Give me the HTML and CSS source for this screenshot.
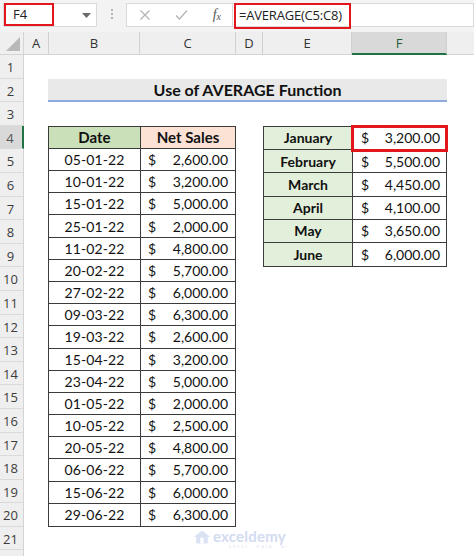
FILE: index.html
```html
<!DOCTYPE html>
<html>
<head>
<meta charset="utf-8">
<link rel="stylesheet" href="styles.css">
</head>
<body>
<div class="app">
  <div class="fbar">
    <div class="namebox">
      <span class="name-ref">F4</span>
      <svg class="dd" width="9" height="5" viewBox="0 0 9 5"><path d="M0 0H9L4.5 5Z" fill="#6b6b6b"/></svg>
    </div>
    <div class="grip"><i></i><i></i><i></i></div>
    <div class="fbtns">
      <svg width="12" height="12" viewBox="0 0 12 12"><path d="M1.5 1.5L10.5 10.5M10.5 1.5L1.5 10.5" stroke="#b4b4b4" stroke-width="1.3" fill="none"/></svg>
      <svg width="13" height="12" viewBox="0 0 13 12"><path d="M1 6.5L4.5 10L12 1.5" stroke="#b4b4b4" stroke-width="1.3" fill="none"/></svg>
      <span class="fx">f<sub>x</sub></span>
    </div>
    <div class="finput"><span class="formula">=AVERAGE(C5:C8)</span></div>
  </div>

  <div class="sheet">
    <div class="corner"><svg width="14" height="14" viewBox="0 0 14 14"><path d="M14 0V14H0Z" fill="#b9b9b9"/></svg></div>
    <div class="ch">A</div>
    <div class="ch">B</div>
    <div class="ch">C</div>
    <div class="ch">D</div>
    <div class="ch">E</div>
    <div class="ch sel">F</div>
    <div class="ch last"></div>

    <div class="rh r1">1</div>
    <div class="rh r2">2</div>
    <div class="rh r3">3</div>
    <div class="rh r4 sel">4</div>
    <div class="rh r5">5</div>
    <div class="rh r6">6</div>
    <div class="rh r7">7</div>
    <div class="rh r8">8</div>
    <div class="rh r9">9</div>
    <div class="rh r10">10</div>
    <div class="rh r11">11</div>
    <div class="rh r12">12</div>
    <div class="rh r13">13</div>
    <div class="rh r14">14</div>
    <div class="rh r15">15</div>
    <div class="rh r16">16</div>
    <div class="rh r17">17</div>
    <div class="rh r18">18</div>
    <div class="rh r19">19</div>
    <div class="rh r20">20</div>
    <div class="rh r21">21</div>
    <div class="rh r22"></div>

    <div class="title">Use of AVERAGE Function</div>

    <div class="t1">
      <div class="hd date">Date</div><div class="hd sales">Net Sales</div>
      <div class="d">05-01-22</div><div class="m"><span>$</span><span>2,600.00</span></div>
      <div class="d">10-01-22</div><div class="m"><span>$</span><span>3,200.00</span></div>
      <div class="d">15-01-22</div><div class="m"><span>$</span><span>5,000.00</span></div>
      <div class="d">25-01-22</div><div class="m"><span>$</span><span>2,000.00</span></div>
      <div class="d">11-02-22</div><div class="m"><span>$</span><span>4,800.00</span></div>
      <div class="d">20-02-22</div><div class="m"><span>$</span><span>5,700.00</span></div>
      <div class="d">27-02-22</div><div class="m"><span>$</span><span>6,000.00</span></div>
      <div class="d">09-03-22</div><div class="m"><span>$</span><span>6,300.00</span></div>
      <div class="d">19-03-22</div><div class="m"><span>$</span><span>2,600.00</span></div>
      <div class="d">15-04-22</div><div class="m"><span>$</span><span>3,200.00</span></div>
      <div class="d">23-04-22</div><div class="m"><span>$</span><span>5,000.00</span></div>
      <div class="d">01-05-22</div><div class="m"><span>$</span><span>2,000.00</span></div>
      <div class="d">10-05-22</div><div class="m"><span>$</span><span>2,500.00</span></div>
      <div class="d">20-05-22</div><div class="m"><span>$</span><span>4,800.00</span></div>
      <div class="d">06-06-22</div><div class="m"><span>$</span><span>5,700.00</span></div>
      <div class="d">15-06-22</div><div class="m"><span>$</span><span>6,000.00</span></div>
      <div class="d">29-06-22</div><div class="m"><span>$</span><span>6,300.00</span></div>
    </div>

    <div class="t2">
      <div class="mo">January</div><div class="m active"><span>$</span><span>3,200.00</span></div>
      <div class="mo">February</div><div class="m"><span>$</span><span>5,500.00</span></div>
      <div class="mo">March</div><div class="m"><span>$</span><span>4,450.00</span></div>
      <div class="mo">April</div><div class="m"><span>$</span><span>4,100.00</span></div>
      <div class="mo">May</div><div class="m"><span>$</span><span>3,650.00</span></div>
      <div class="mo">June</div><div class="m"><span>$</span><span>6,000.00</span></div>
    </div>

    <div class="wm">
      <svg width="18" height="16" viewBox="0 0 22 18"><path d="M11 1L1 9H4V17H18V9H21Z" fill="#dbe2f4"/><rect x="9" y="10" width="4" height="7" fill="#fff"/></svg>
      <div class="wm-txt"><span class="wm-name">exceldemy</span><span class="wm-sub">EXCEL · DATA · BI</span></div>
    </div>
  </div>
</div>
</body>
</html>
```

FILE: styles.css
```css
* { box-sizing: border-box; }
html, body { margin: 0; padding: 0; background: #fff; }
body { font-family: Lato, "Open Sans", sans-serif; color: #111; width: 474px; height: 556px; overflow: hidden; }

.fbar {
  height: 32px;
  background: #f3f3f3;
  display: flex;
  align-items: flex-start;
  padding-top: 3px;
  padding-left: 3px;
}
.namebox {
  width: 94px;
  height: 24px;
  background: #fff;
  border: 1px solid #dadada;
  display: flex;
  align-items: center;
  justify-content: space-between;
  padding-right: 5px;
}
.name-ref {
  width: 50px;
  height: 23px;
  margin-top: -1px;
  border: 2.5px solid #e3161e;
  font-size: 13px;
  line-height: 18px;
  padding-left: 7px;
  color: #222;
  font-family: "Open Sans", sans-serif;
}
.grip {
  width: 29px;
  display: flex;
  flex-direction: column;
  align-items: center;
  gap: 2px;
  padding-top: 6px;
}
.grip i { display: block; width: 2px; height: 2px; background: #b5b5b5; }
.fbtns {
  width: 106px;
  height: 24px;
  background: #fff;
  border: 1px solid #dadada;
  border-right: none;
  display: flex;
  align-items: center;
  justify-content: space-between;
  padding: 0 11px 0 12px;
}
.fx { font-family: "Liberation Serif", serif; font-style: italic; font-size: 14px; color: #555; }
.fx sub { font-size: 10px; vertical-align: -1px; }
.finput {
  flex: 1;
  height: 24px;
  background: #fff;
  border: 1px solid #dadada;
}
.formula {
  display: inline-block;
  height: 26px;
  width: 117px;
  margin-left: 1px;
  margin-top: -1px;
  border: 2.5px solid #e3161e;
  font-family: "Open Sans", sans-serif;
  font-size: 13px;
  line-height: 20px;
  padding-left: 3px;
  color: #222;
  white-space: nowrap;
  letter-spacing: -0.2px;
}

.sheet {
  position: relative;
  display: grid;
  grid-template-columns: 24px 25px 91px 96px 27px 89px 95px 27px;
  grid-template-rows: 23px repeat(22, 23.6px);
}
.corner {
  grid-row: 1; grid-column: 1;
  background: #efefef;
  border-right: 1px solid #d4d4d4;
  border-bottom: 1px solid #d4d4d4;
  display: flex; align-items: flex-end; justify-content: flex-end;
  padding: 0 3px 3px 0;
}
.ch {
  grid-row: 1;
  background: #efefef;
  border-right: 1px solid #d0d0d0;
  border-bottom: 1px solid #d4d4d4;
  text-align: center;
  font-size: 13px;
  line-height: 22px;
  color: #333;
  font-family: "Open Sans", sans-serif;
}
.ch.sel { background: #d9d9d9; border-bottom: 2px solid #217346; color: #1e5c38; }
.ch.last { border-right: none; }

.rh {
  grid-column: 1;
  background: #efefef;
  border-right: 1px solid #d4d4d4;
  border-bottom: 1px solid #dadada;
  text-align: center;
  font-size: 13px;
  line-height: 24px;
  color: #3c3c3c;
  font-family: "Open Sans", sans-serif;
  padding-right: 2px;
}
.rh.sel { background: #d9d9d9; border-right: 2px solid #217346; color: #555; }
.r1 { grid-row: 2; } .r2 { grid-row: 3; } .r3 { grid-row: 4; } .r4 { grid-row: 5; }
.r5 { grid-row: 6; } .r6 { grid-row: 7; } .r7 { grid-row: 8; } .r8 { grid-row: 9; }
.r9 { grid-row: 10; } .r10 { grid-row: 11; } .r11 { grid-row: 12; } .r12 { grid-row: 13; }
.r13 { grid-row: 14; } .r14 { grid-row: 15; } .r15 { grid-row: 16; } .r16 { grid-row: 17; }
.r17 { grid-row: 18; } .r18 { grid-row: 19; } .r19 { grid-row: 20; } .r20 { grid-row: 21; }
.r21 { grid-row: 22; } .r22 { grid-row: 23; }

.title {
  grid-row: 3; grid-column: 3 / 8;
  margin-left: -1px;
  background: #e9e9e9;
  border-bottom: 2px solid #8faadc;
  text-align: center;
  font-weight: 700;
  font-size: 16px;
  line-height: 22px;
  color: #111;
}

.t1 {
  grid-row: 5 / 22; grid-column: 3 / 5;
  margin-left: -1px;
  display: grid;
  grid-template-columns: 92px 1fr;
  grid-auto-rows: 1fr;
  border: 1.5px solid #3b3b3b;
}
.t2 {
  grid-row: 5 / 11; grid-column: 6 / 8;
  display: grid;
  grid-template-columns: 89px 1fr;
  grid-auto-rows: 1fr;
  border: 1.5px solid #3b3b3b;
}
.t1 > div, .t2 > div {
  border-right: 1px solid #3b3b3b;
  border-bottom: 1px solid #3b3b3b;
  font-size: 14px;
  display: flex;
  align-items: center;
}
.t1 > div:nth-child(2n), .t2 > div:nth-child(2n) { border-right: none; }
.t1 > div:nth-last-child(-n+2), .t2 > div:nth-last-child(-n+2) { border-bottom: none; }

.hd { justify-content: center; font-weight: 700; }
.t1 > .hd { font-size: 15px; }
.hd.date { background: #c9e0b8; }
.hd.sales { background: #fbe2d5; }
.d { justify-content: center; letter-spacing: 0.1px; }
.m { justify-content: space-between; padding: 0 7px 0 7px; background: #fff; }
.mo { justify-content: center; font-weight: 700; background: #e2efda; }
.t2 .m { padding: 0 6px 0 8px; }
.m.active { outline: 3px solid #e3161e; outline-offset: -1px; position: relative; z-index: 1; }

.wm {
  position: absolute;
  left: 193px;
  top: 497px;
  display: flex;
  align-items: flex-start;
  gap: 2px;
}
.wm-txt { display: flex; flex-direction: column; line-height: 1; }
.wm-name { font-size: 15px; font-weight: 700; color: #d3dbf1; letter-spacing: 0.2px; }
.wm-sub { font-size: 4px; color: #dde3f3; letter-spacing: 1.6px; margin-top: 1px; padding-left: 16px; }
```
